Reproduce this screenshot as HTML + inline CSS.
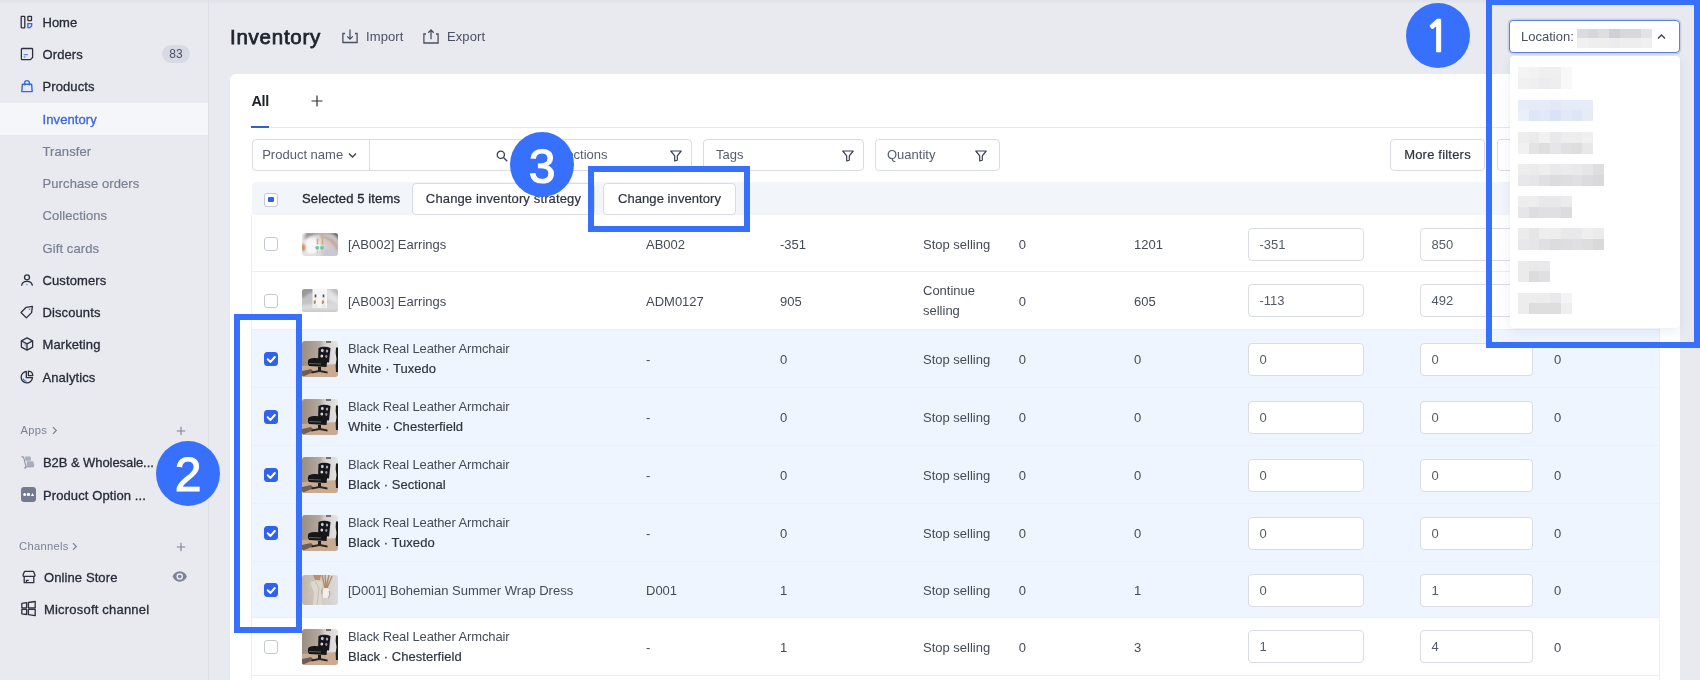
<!DOCTYPE html>
<html lang="en">
<head>
<meta charset="utf-8">
<title>Inventory</title>
<style>
*{box-sizing:border-box;margin:0;padding:0}
html,body{width:1700px;height:680px;overflow:hidden}
body{position:relative;background:#e8eaf0;font-family:"Liberation Sans",sans-serif;font-size:13px;color:#2b303b;-webkit-font-smoothing:antialiased}
.abs{position:absolute}
.topshade{position:absolute;left:0;top:0;width:1700px;height:4px;background:linear-gradient(#dfe1e8,#e8eaf0)}
/* sidebar */
#side{position:absolute;left:0;top:0;width:209px;height:680px;border-right:1px solid #dcdfe7}
.nav{position:absolute;left:0;width:208px;height:32px;line-height:32px;white-space:nowrap}
.nav .t{position:absolute;left:42.5px;top:1px;font-size:13px;color:#262b36;-webkit-text-stroke:.3px #262b36;letter-spacing:.1px}
.nav.sub .t{color:#787f91;-webkit-text-stroke:.2px #787f91}
.nav.act{background:#f5f6fa}
.nav.act .t{color:#3d66dc;-webkit-text-stroke:.35px #3d66dc}
.nav svg{position:absolute;left:20px;top:9px;width:14px;height:14px;overflow:visible}
.badge{position:absolute;left:162px;top:7px;width:28px;height:18px;border-radius:9px;background:#d7dae5;color:#4a5060;font-size:12px;line-height:18px;text-align:center}
  .sec{position:absolute;font-size:11.2px;color:#7b8294;letter-spacing:.3px;white-space:nowrap}
/* main */
#title{position:absolute;left:230px;top:21.5px;font-size:20.5px;line-height:30px;color:#20242e;-webkit-text-stroke:.75px #20242e;letter-spacing:.75px;white-space:nowrap}
.hbtn{position:absolute;top:28px;font-size:13px;line-height:18px;color:#4a5060;white-space:nowrap;letter-spacing:.1px}
#card{position:absolute;left:230px;top:74px;width:1450px;height:620px;background:#fff;border-radius:6px}
.tabline{position:absolute;left:252px;top:127px;width:1407px;height:1px;background:#e6e8ee}
.fbox{position:absolute;top:139px;height:32px;border:1px solid #d9dce4;border-radius:4px;background:#fff;font-size:13px;line-height:30px;color:#565d6c;white-space:nowrap}
.fbox .l{position:absolute;left:11px;top:0}
.btn{position:absolute;height:32px;border:1px solid #d9dce4;border-radius:4px;background:#fff;font-size:13px;line-height:30px;color:#2f3440;text-align:center;white-space:nowrap;-webkit-text-stroke:.2px #2f3440}
/* table */
#bulk{position:absolute;left:252px;top:182px;width:1407px;height:33px;background:#f2f5fa;border-radius:4px 4px 0 0}
.row{position:absolute;left:252px;width:1407px;border-bottom:1px solid #eceef3;background:#fff}
.row.sel{background:#eef5ff;border-bottom-color:#e8f0fc}
.row .c{position:absolute;white-space:nowrap;font-size:13px;line-height:20px;color:#454a57;letter-spacing:0}
.row .n1{letter-spacing:-.12px}
.row .n2{color:#2f3440;-webkit-text-stroke:.18px #2f3440;letter-spacing:.05px}
.cb{position:absolute;left:12px;width:14px;height:14px;border:1px solid #c5c9d4;border-radius:3px;background:#fff}
.cb.on{background:#3062ee;border-color:#3062ee}
.cb.on svg{position:absolute;left:-1px;top:-1px;width:14px;height:14px}
.th{position:absolute;left:50px;width:36px;border-radius:3px;overflow:hidden}
.th svg{display:block}
.inp{position:absolute;height:33px;border:1px solid #d9dce4;border-radius:4px;background:#fff;font-size:13px;line-height:32px;color:#555a67;padding-left:10.5px}
/* annotations */
.circ{position:absolute;width:64px;height:65px;border-radius:50%;background:#3870fe;color:#fff;font-size:48px;line-height:64px;text-align:center;font-weight:400;-webkit-text-stroke:1.1px #fff}
.hl{position:absolute;border:6px solid #3870fe}
/* dropdown */
#loc{position:absolute;left:1509px;top:20px;width:171px;height:33px;border:1px solid #5f80d8;border-radius:4px;background:#fff;box-shadow:0 0 0 1.5px rgba(95,128,216,.22)}
#panel{position:absolute;left:1510px;top:56px;width:170px;height:272px;background:#fff;border-radius:4px;box-shadow:0 4px 12px rgba(60,80,160,.09),0 0 2px rgba(60,80,160,.06)}
.blur{position:absolute;left:8px;height:22px;background:linear-gradient(#f0f0f1 0 50%,#e6e6e8 50% 100%)}
</style>
</head>
<body>
<div id="wrap" style="position:absolute;left:0;top:0;width:1700px;height:680px;will-change:transform">
<div class="topshade"></div>
<div id="side">
 <div class="nav" style="top:6px"><svg viewBox="0 0 14 14" fill="none" stroke="#2b303b" stroke-width="1.3"><rect x="1.2" y="1.4" width="3.6" height="11.4" rx=".6"/><rect x="7.9" y="1.4" width="3.6" height="4.2" rx=".4"/><path d="M7.9 8.6h3.8v2.2l-1.8 1.9h-2z" stroke="#3d66dc"/></svg><span class="t" style="letter-spacing:0">Home</span></div>
 <div class="nav" style="top:38px"><svg viewBox="0 0 14 14" fill="none" stroke="#2b303b" stroke-width="1.3"><path d="M2.2 1.5h9.6a.8.8 0 0 1 .8.8v8.2l-2.2 2.2H2.2a.8.8 0 0 1-.8-.8V2.3a.8.8 0 0 1 .8-.8z"/><path d="M3.8 7.8h4M3.8 10h1.6" stroke="#3d66dc" stroke-width="1.1"/></svg><span class="t">Orders</span><span class="badge">83</span></div>
 <div class="nav" style="top:70px"><svg viewBox="0 0 14 14" fill="none" stroke="#3d66dc" stroke-width="1.4"><path d="M2.4 5.2h9.2l.6 7.4H1.8z" stroke-linejoin="round"/><path d="M4.6 6.6V4a2.4 2.4 0 0 1 4.8 0v2.6"/></svg><span class="t">Products</span></div>
 <div class="nav sub act" style="top:103px"><span class="t">Inventory</span></div>
 <div class="nav sub" style="top:135px"><span class="t">Transfer</span></div>
 <div class="nav sub" style="top:167px"><span class="t">Purchase orders</span></div>
 <div class="nav sub" style="top:199px"><span class="t">Collections</span></div>
 <div class="nav sub" style="top:232px"><span class="t">Gift cards</span></div>
 <div class="nav" style="top:264px"><svg viewBox="0 0 14 14" fill="none" stroke="#2b303b" stroke-width="1.3"><circle cx="7" cy="4.3" r="2.5"/><path d="M1.6 12.8c.3-3 2.6-4.4 5.4-4.4s5.100 1.400 5.400 4.400"/><circle cx="7" cy="11.600" r=".7" fill="#3d66dc" stroke="none"/></svg><span class="t">Customers</span></div>
 <div class="nav" style="top:296px"><svg viewBox="0 0 14 14" fill="none" stroke="#2b303b" stroke-width="1.3" stroke-linejoin="round"><path d="M6.200 2.300 12.400 1.400 11.600 7.600 6.400 12.900 1.000 7.500z"/><circle cx="9.600" cy="4.300" r=".8" fill="#3d66dc" stroke="none"/></svg><span class="t">Discounts</span></div>
 <div class="nav" style="top:328px"><svg viewBox="0 0 14 14" fill="none" stroke="#2b303b" stroke-width="1.3" stroke-linejoin="round"><path d="M7 .9 12.600 3.800V10.200L7 13.100 1.400 10.200V3.800z"/><path d="M1.600 4 7 6.900 12.400 4M7 6.900V13"/><path d="M3 5.600 6 7.300v3.400z" fill="#9db3f0" stroke="none"/></svg><span class="t">Marketing</span></div>
 <div class="nav" style="top:361px"><svg viewBox="0 0 14 14" fill="none" stroke="#2b303b" stroke-width="1.3"><path d="M6.300 1.500A5.700 5.700 0 1 0 12.500 7.700H6.300z" stroke-linejoin="round"/><path d="M8.400 1.200A4.600 4.600 0 0 1 12.800 5.600H8.400z" stroke-linejoin="round"/><path d="M3.200 8.600a3.600 3.600 0 0 0 3.400 2.600" stroke="#3d66dc" stroke-width="1.100"/></svg><span class="t">Analytics</span></div>

 <div class="sec" style="left:20.500px;top:423px;line-height:15px">Apps</div>
 <svg class="abs" style="left:51px;top:425px" width="8" height="11" viewBox="0 0 8 11" fill="none" stroke="#7b8294" stroke-width="1.200"><path d="M2 2.200 5.300 5.500 2 8.800"/></svg>
 <svg class="abs" style="left:176px;top:426px" width="10" height="10" viewBox="0 0 10 10" stroke="#7b8294" stroke-width="1.100"><path d="M5 .8V9.200M.8 5H9.200"/></svg>
 <div class="nav" style="top:446px"><svg viewBox="0 0 14 14" fill="#9a9fae" stroke="none" style="left:21px;top:9px"><path d="M4.200 1.500h5.600v4.200H4.200zM5.800 6.300h6.400l1.300 4.700H5.800z" opacity=".8"/><path d="M.6 1.600 2.600 2.200 5 11.800h7.800" fill="none" stroke="#8a90a0" stroke-width="1.100"/><circle cx="4.300" cy="12.800" r="1" fill="#8a90a0"/></svg><span class="t" style="left:43px;letter-spacing:-.07px">B2B &amp; Wholesale...</span></div>
 <div class="nav" style="top:479px"><svg viewBox="0 0 15 15" style="left:21px;top:8px;width:15px;height:15px"><rect x="0" y="0" width="15" height="15" rx="3.200" fill="#747b90"/><circle cx="3.700" cy="7.500" r="1.500" fill="#fff"/><rect x="6.100" y="6.100" width="2.800" height="2.800" fill="#fff"/><path d="M9.900 9l1.600-3 1.600 3z" fill="#fff"/></svg><span class="t" style="left:43px">Product Option ...</span></div>

 <div class="sec" style="left:19px;top:539px;line-height:15px">Channels</div>
 <svg class="abs" style="left:70.500px;top:541px" width="8" height="11" viewBox="0 0 8 11" fill="none" stroke="#7b8294" stroke-width="1.200"><path d="M2 2.200 5.300 5.500 2 8.800"/></svg>
 <svg class="abs" style="left:176px;top:542px" width="10" height="10" viewBox="0 0 10 10" stroke="#7b8294" stroke-width="1.100"><path d="M5 .8V9.200M.8 5H9.200"/></svg>
 <div class="nav" style="top:560.5px"><svg viewBox="0 0 14 14" fill="none" stroke="#2b303b" stroke-width="1.300" stroke-linejoin="round" style="left:21.500px;top:9px"><path d="M2.600 1.300h8.800l1.600 3.600a2 2 0 0 1-1.200 1.900v5.900H2.200V6.800A2 2 0 0 1 1 4.900z"/><path d="M1.600 6.400h10.800M4.400 12.600v-2.200h2.400"/></svg><span class="t" style="left:44px">Online Store</span>
  <svg viewBox="0 0 16 12" style="left:171.500px;top:10.500px;width:15.500px;height:11px" fill="#7b8294"><path d="M8 .4C4.400.4 1.500 2.700.2 6c1.300 3.300 4.200 5.600 7.800 5.600s6.500-2.300 7.800-5.600C14.500 2.700 11.600.4 8 .4zm0 9.200A3.600 3.600 0 1 1 8 2.400a3.600 3.600 0 0 1 0 7.200zM8 4a2 2 0 1 0 0 4 2 2 0 0 0 0-4z" fill-rule="evenodd"/></svg></div>
 <div class="nav" style="top:592.5px"><svg viewBox="0 0 15 15" fill="none" stroke="#2b303b" stroke-width="1.300" stroke-linejoin="round" style="left:21px;top:8.500px;width:15px;height:15px"><path d="M.8 2.400 5.600 1.700v5.100H.8zM7.400 1.500 14.200.5V6.800H7.400zM.8 8.400h4.800v5.100L.8 12.800zM7.400 8.400h6.800v6.300L7.400 13.700z"/></svg><span class="t" style="left:44px;letter-spacing:.2px">Microsoft channel</span></div>
</div>

<div id="title">Inventory</div>
<svg class="abs" style="left:342px;top:29px" width="16" height="15" viewBox="0 0 16 15" fill="none" stroke="#4a5060" stroke-width="1.300"><path d="M3 4.500H.9v9h14.200v-9H13"/><path d="M8 .6v9.600M5.200 7.400 8 10.200l2.800-2.800"/></svg>
<div class="hbtn" style="left:366px">Import</div>
<svg class="abs" style="left:422.500px;top:28.500px" width="16" height="15.500" viewBox="0 0 16 15.500" fill="none" stroke="#4a5060" stroke-width="1.300"><path d="M3 5H.9v9h14.200V5H13"/><path d="M8 10.200V1M5.300 3.700 8 1l2.700 2.700"/></svg>
<div class="hbtn" style="left:447px">Export</div>

<div id="card"></div>
<div class="abs" style="left:251.500px;top:91px;font-size:14.5px;line-height:20px;font-weight:700;color:#20242e;letter-spacing:-.35px">All</div>
<svg class="abs" style="left:311px;top:95px" width="12" height="12" viewBox="0 0 12 12" stroke="#2b303b" stroke-width="1.200"><path d="M6 .5v11M.5 6h11"/></svg>
<div class="tabline"></div>
<div class="abs" style="left:251px;top:126px;width:18px;height:2px;background:#3a5cc6"></div>

<div class="fbox" style="left:252px;width:273px"><span class="l" style="left:9.2px">Product name</span>
 <svg class="abs" style="left:94.5px;top:12px" width="9" height="7" viewBox="0 0 9 7" fill="none" stroke="#3b4150" stroke-width="1.300"><path d="M1 1.500 4.500 5 8 1.500"/></svg>
 <div class="abs" style="left:116px;top:0;width:1px;height:30px;background:#d9dce4"></div>
 <svg class="abs" style="left:243px;top:10px" width="12" height="12" viewBox="0 0 12 12" fill="none" stroke="#3b4150" stroke-width="1.300"><circle cx="4.800" cy="4.800" r="3.600"/><path d="M7.500 7.500 11.200 11.200"/></svg>
</div>
<div class="fbox" style="left:531px;width:161px"><span class="l" style="left:12px">Collections</span><svg class="abs" style="left:137.500px;top:9.500px" width="12" height="12" viewBox="0 0 12 12" fill="none" stroke="#3b4150" stroke-width="1.200" stroke-linejoin="round"><path d="M.8 1h10.400L7.300 5.800v4.400L4.700 11V5.800z"/></svg></div>
<div class="fbox" style="left:703px;width:161px"><span class="l" style="left:12px">Tags</span><svg class="abs" style="left:137.500px;top:9.500px" width="12" height="12" viewBox="0 0 12 12" fill="none" stroke="#3b4150" stroke-width="1.200" stroke-linejoin="round"><path d="M.8 1h10.400L7.300 5.800v4.400L4.700 11V5.800z"/></svg></div>
<div class="fbox" style="left:875px;width:125px"><span class="l" style="left:11px">Quantity</span><svg class="abs" style="left:99px;top:9.500px" width="12" height="12" viewBox="0 0 12 12" fill="none" stroke="#3b4150" stroke-width="1.200" stroke-linejoin="round"><path d="M.8 1h10.400L7.300 5.800v4.400L4.700 11V5.800z"/></svg></div>
<div class="btn" style="left:1390px;top:139px;width:95px;letter-spacing:.2px">More filters</div>
<div class="btn" style="left:1497px;top:139px;width:162px;text-align:left;padding-left:13px">Edit columns</div>

<div id="bulk"><div class="cb" style="top:10.5px"><div class="abs" style="left:3.2px;top:3.2px;width:5.6px;height:5.6px;background:#3062ee;border-radius:1px"></div></div><div class="abs" style="left:50px;top:7px;line-height:20px;font-size:13px;color:#262b36;-webkit-text-stroke:.35px #262b36;letter-spacing:.12px;white-space:nowrap">Selected 5 items</div></div>
<div class="btn" style="left:412px;top:183px;width:183px;letter-spacing:.14px">Change inventory strategy</div>
<div class="btn" style="left:603px;top:183px;width:133px;letter-spacing:.07px">Change inventory</div>
<div class="row" style="top:215px;height:57px"><div class="cb" style="top:22px"></div><div class="th" style="top:17.75px;height:23px;left:49.500px;width:36.500px"><svg width="37" height="23" viewBox="0 0 37 23"><defs><filter id="be1" x="-20%" y="-20%" width="140%" height="140%"><feGaussianBlur stdDeviation="1.1"/></filter><filter id="be1b" x="-20%" y="-20%" width="140%" height="140%"><feGaussianBlur stdDeviation=".55"/></filter><linearGradient id="g1" x1="0" x2="1"><stop offset="0" stop-color="#e4e3e6"/><stop offset=".5" stop-color="#dcd8da"/><stop offset="1" stop-color="#c9bfbf"/></linearGradient></defs><rect width="37" height="23" fill="url(#g1)"/><g filter="url(#be1)"><path d="M4 -1H38V6Q30 0 18 1 8 2 2 7z" fill="#9d9594"/><path d="M30 -1H38V9Q35 3 30 -1z" fill="#6f6362"/><ellipse cx="10" cy="13" rx="8" ry="8" fill="#f7f7f9"/><path d="M18 3Q30 4 36 16" stroke="#bca8a2" stroke-width="3.2" fill="none"/><path d="M22 8Q29 10 33 20" stroke="#d6c5c0" stroke-width="2.500" fill="none"/><path d="M22 17Q28 14 37 20V24H20z" fill="#c6c9d3"/><ellipse cx="1.500" cy="14.500" rx="2.200" ry="3.800" fill="#c98c4e"/></g><g filter="url(#be1b)"><path d="M15.500 5.500v6M20.500 4.500v7" stroke="#cfae72" stroke-width="1.700"/><circle cx="15.200" cy="14.800" r="1.900" fill="#6cc79a"/><circle cx="20" cy="14.800" r="1.900" fill="#6cc79a"/><path d="M15.300 17.500v3M20 17.500v3" stroke="#d8c7a2" stroke-width="1.200"/></g></svg></div><div class="c" style="left:96px;top:20px">[AB002] Earrings</div><div class="c" style="left:394px;top:20px">AB002</div><div class="c" style="left:528px;top:20px">-351</div><div class="c" style="left:671px;top:20px">Stop selling</div><div class="c" style="left:766.7px;top:20px">0</div><div class="c" style="left:882px;top:20px">1201</div><div class="inp" style="left:996px;top:12.5px;width:116px">-351</div><div class="inp" style="left:1168px;top:12.5px;width:113px">850</div><div class="c" style="left:1302px;top:20px"></div></div>
<div class="row" style="top:272px;height:58px"><div class="cb" style="top:21.5px"></div><div class="th" style="top:16.75px;height:23px;left:49.500px;width:36.500px"><svg width="37" height="23" viewBox="0 0 37 23"><defs><filter id="be2" x="-20%" y="-20%" width="140%" height="140%"><feGaussianBlur stdDeviation=".9"/></filter><filter id="be2b" x="-20%" y="-20%" width="140%" height="140%"><feGaussianBlur stdDeviation=".5"/></filter><linearGradient id="g2" x1="0" x2="1"><stop offset="0" stop-color="#b9b9bc"/><stop offset=".5" stop-color="#cfcfd2"/><stop offset="1" stop-color="#d6d6d9"/></linearGradient></defs><rect width="37" height="23" fill="url(#g2)"/><g filter="url(#be2)"><path d="M-1 -1H12V4Q6 3 3 8L-1 12z" fill="#98989b"/><path d="M-1 9Q5 6 9 11V16H-1z" fill="#c3c3c6"/><path d="M25 0 38 10V16L25 10z" fill="#e4e4e6"/><path d="M27 -1H38V8z" fill="#bcbcbf"/><path d="M-1 16Q18 14 38 16V24H-1z" fill="#d9dadd"/><path d="M-1 21H38V24H-1z" fill="#c9cacd"/></g><g filter="url(#be2b)"><rect x="10.500" y="-1" width="14.500" height="20" fill="#f6f6f6"/><path d="M13.500 5.500v3M21.500 5.500v3" stroke="#5a5450" stroke-width="1.700"/><path d="M13.500 8.500v3M21.500 8.500v3" stroke="#e9e6e2" stroke-width="1.500"/><path d="M12.800 11.500v3.500M21 11.500v3.500" stroke="#b48f6c" stroke-width="2.200"/><path d="M13.300 14 10.500 18.500h6.500zM21.500 14 18.500 18.500h6.500z" fill="#ece7e1"/></g></svg></div><div class="c" style="left:96px;top:19.5px">[AB003] Earrings</div><div class="c" style="left:394px;top:19.5px">ADM0127</div><div class="c" style="left:528px;top:19.5px">905</div><div class="c" style="left:671px;top:8.5px">Continue</div><div class="c" style="left:671px;top:28.5px">selling</div><div class="c" style="left:766.7px;top:19.5px">0</div><div class="c" style="left:882px;top:19.5px">605</div><div class="inp" style="left:996px;top:12px;width:116px">-113</div><div class="inp" style="left:1168px;top:12px;width:113px">492</div><div class="c" style="left:1302px;top:19.5px"></div></div>
<div class="row sel" style="top:330px;height:58px"><div class="cb on" style="top:22px"><svg viewBox="0 0 14 14" fill="none" stroke="#fff" stroke-width="2" stroke-linecap="round" stroke-linejoin="round"><path d="M3.700 7.300 6.500 9.900 10.800 5"/></svg></div><div class="th" style="top:11px;height:36px"><svg width="36" height="36" viewBox="0 0 36 36"><defs><filter id="bl1" x="-10%" y="-10%" width="120%" height="120%"><feGaussianBlur stdDeviation=".55"/></filter><linearGradient id="w1" x1="0" x2="1"><stop offset="0" stop-color="#9a8e84"/><stop offset=".5" stop-color="#b5a99e"/><stop offset=".62" stop-color="#d2cfcb"/><stop offset="1" stop-color="#e6e5e4"/></linearGradient></defs><rect width="36" height="36" fill="url(#w1)"/><g filter="url(#bl1)"><path d="M0 25 36 23V36H0z" fill="#c8ab90"/><path d="M0 30 9 28 12 31 0 36z" fill="#6e6158"/><rect x="24" y="0" width="5" height="2" fill="#77716c"/><path d="M34 6.500Q33 12 34.500 18 33 24 34 31H37V6.500z" fill="#1f1c1a"/><path d="M16.500 7Q22 4.500 28.500 7L27 21.500 16 20.500z" fill="#15161a"/><path d="M6.500 18.500Q12 16 19 18L25 21 24.500 26 7 25Q5 22 6.500 18.500z" fill="#121317"/><path d="M7 22.500 19 23" stroke="#5c5f66" stroke-width="1.200"/><path d="M16 26h3v4h-3z" fill="#1b1b1e"/><path d="M9.500 30.500 17.500 29 25.500 30.500V32.500L17.500 31 9.500 32.500z" fill="#2a2522"/><ellipse cx="20.300" cy="9.500" rx="1.400" ry="1.700" fill="#c9ccd0"/><ellipse cx="25" cy="10" rx="1.200" ry="1.600" fill="#a9adb3"/><ellipse cx="19.800" cy="15" rx="1.400" ry="1.600" fill="#d6d8db"/><ellipse cx="24.300" cy="15.500" rx="1.100" ry="1.400" fill="#94989f"/></g></svg></div><div class="c n1" style="left:96px;top:9px">Black Real Leather Armchair</div><div class="c n2" style="left:96px;top:29px">White · Tuxedo</div><div class="c" style="left:394px;top:20px">-</div><div class="c" style="left:528px;top:20px">0</div><div class="c" style="left:671px;top:20px">Stop selling</div><div class="c" style="left:766.7px;top:20px">0</div><div class="c" style="left:882px;top:20px">0</div><div class="inp" style="left:996px;top:12.5px;width:116px">0</div><div class="inp" style="left:1168px;top:12.5px;width:113px">0</div><div class="c" style="left:1302px;top:20px">0</div></div>
<div class="row sel" style="top:388px;height:58px"><div class="cb on" style="top:22px"><svg viewBox="0 0 14 14" fill="none" stroke="#fff" stroke-width="2" stroke-linecap="round" stroke-linejoin="round"><path d="M3.700 7.300 6.500 9.900 10.800 5"/></svg></div><div class="th" style="top:11px;height:36px"><svg width="36" height="36" viewBox="0 0 36 36"><defs><filter id="bl2" x="-10%" y="-10%" width="120%" height="120%"><feGaussianBlur stdDeviation=".55"/></filter><linearGradient id="w2" x1="0" x2="1"><stop offset="0" stop-color="#9a8e84"/><stop offset=".5" stop-color="#b5a99e"/><stop offset=".62" stop-color="#d2cfcb"/><stop offset="1" stop-color="#e6e5e4"/></linearGradient></defs><rect width="36" height="36" fill="url(#w2)"/><g filter="url(#bl2)"><path d="M0 25 36 23V36H0z" fill="#c8ab90"/><path d="M0 30 9 28 12 31 0 36z" fill="#6e6158"/><rect x="24" y="0" width="5" height="2" fill="#77716c"/><path d="M34 6.500Q33 12 34.500 18 33 24 34 31H37V6.500z" fill="#1f1c1a"/><path d="M16.500 7Q22 4.500 28.500 7L27 21.500 16 20.500z" fill="#15161a"/><path d="M6.500 18.500Q12 16 19 18L25 21 24.500 26 7 25Q5 22 6.500 18.500z" fill="#121317"/><path d="M7 22.500 19 23" stroke="#5c5f66" stroke-width="1.200"/><path d="M16 26h3v4h-3z" fill="#1b1b1e"/><path d="M9.500 30.500 17.500 29 25.500 30.500V32.500L17.500 31 9.500 32.500z" fill="#2a2522"/><ellipse cx="20.300" cy="9.500" rx="1.400" ry="1.700" fill="#c9ccd0"/><ellipse cx="25" cy="10" rx="1.200" ry="1.600" fill="#a9adb3"/><ellipse cx="19.800" cy="15" rx="1.400" ry="1.600" fill="#d6d8db"/><ellipse cx="24.300" cy="15.500" rx="1.100" ry="1.400" fill="#94989f"/></g></svg></div><div class="c n1" style="left:96px;top:9px">Black Real Leather Armchair</div><div class="c n2" style="left:96px;top:29px">White · Chesterfield</div><div class="c" style="left:394px;top:20px">-</div><div class="c" style="left:528px;top:20px">0</div><div class="c" style="left:671px;top:20px">Stop selling</div><div class="c" style="left:766.7px;top:20px">0</div><div class="c" style="left:882px;top:20px">0</div><div class="inp" style="left:996px;top:12.5px;width:116px">0</div><div class="inp" style="left:1168px;top:12.5px;width:113px">0</div><div class="c" style="left:1302px;top:20px">0</div></div>
<div class="row sel" style="top:446px;height:58px"><div class="cb on" style="top:22px"><svg viewBox="0 0 14 14" fill="none" stroke="#fff" stroke-width="2" stroke-linecap="round" stroke-linejoin="round"><path d="M3.700 7.300 6.500 9.900 10.800 5"/></svg></div><div class="th" style="top:11px;height:36px"><svg width="36" height="36" viewBox="0 0 36 36"><defs><filter id="bl3" x="-10%" y="-10%" width="120%" height="120%"><feGaussianBlur stdDeviation=".55"/></filter><linearGradient id="w3" x1="0" x2="1"><stop offset="0" stop-color="#9a8e84"/><stop offset=".5" stop-color="#b5a99e"/><stop offset=".62" stop-color="#d2cfcb"/><stop offset="1" stop-color="#e6e5e4"/></linearGradient></defs><rect width="36" height="36" fill="url(#w3)"/><g filter="url(#bl3)"><path d="M0 25 36 23V36H0z" fill="#c8ab90"/><path d="M0 30 9 28 12 31 0 36z" fill="#6e6158"/><rect x="24" y="0" width="5" height="2" fill="#77716c"/><path d="M34 6.500Q33 12 34.500 18 33 24 34 31H37V6.500z" fill="#1f1c1a"/><path d="M16.500 7Q22 4.500 28.500 7L27 21.500 16 20.500z" fill="#15161a"/><path d="M6.500 18.500Q12 16 19 18L25 21 24.500 26 7 25Q5 22 6.500 18.500z" fill="#121317"/><path d="M7 22.500 19 23" stroke="#5c5f66" stroke-width="1.200"/><path d="M16 26h3v4h-3z" fill="#1b1b1e"/><path d="M9.500 30.500 17.500 29 25.500 30.500V32.500L17.500 31 9.500 32.500z" fill="#2a2522"/><ellipse cx="20.300" cy="9.500" rx="1.400" ry="1.700" fill="#c9ccd0"/><ellipse cx="25" cy="10" rx="1.200" ry="1.600" fill="#a9adb3"/><ellipse cx="19.800" cy="15" rx="1.400" ry="1.600" fill="#d6d8db"/><ellipse cx="24.300" cy="15.500" rx="1.100" ry="1.400" fill="#94989f"/></g></svg></div><div class="c n1" style="left:96px;top:9px">Black Real Leather Armchair</div><div class="c n2" style="left:96px;top:29px">Black · Sectional</div><div class="c" style="left:394px;top:20px">-</div><div class="c" style="left:528px;top:20px">0</div><div class="c" style="left:671px;top:20px">Stop selling</div><div class="c" style="left:766.7px;top:20px">0</div><div class="c" style="left:882px;top:20px">0</div><div class="inp" style="left:996px;top:12.5px;width:116px">0</div><div class="inp" style="left:1168px;top:12.5px;width:113px">0</div><div class="c" style="left:1302px;top:20px">0</div></div>
<div class="row sel" style="top:504px;height:58px"><div class="cb on" style="top:22px"><svg viewBox="0 0 14 14" fill="none" stroke="#fff" stroke-width="2" stroke-linecap="round" stroke-linejoin="round"><path d="M3.700 7.300 6.500 9.900 10.800 5"/></svg></div><div class="th" style="top:11px;height:36px"><svg width="36" height="36" viewBox="0 0 36 36"><defs><filter id="bl4" x="-10%" y="-10%" width="120%" height="120%"><feGaussianBlur stdDeviation=".55"/></filter><linearGradient id="w4" x1="0" x2="1"><stop offset="0" stop-color="#9a8e84"/><stop offset=".5" stop-color="#b5a99e"/><stop offset=".62" stop-color="#d2cfcb"/><stop offset="1" stop-color="#e6e5e4"/></linearGradient></defs><rect width="36" height="36" fill="url(#w4)"/><g filter="url(#bl4)"><path d="M0 25 36 23V36H0z" fill="#c8ab90"/><path d="M0 30 9 28 12 31 0 36z" fill="#6e6158"/><rect x="24" y="0" width="5" height="2" fill="#77716c"/><path d="M34 6.500Q33 12 34.500 18 33 24 34 31H37V6.500z" fill="#1f1c1a"/><path d="M16.500 7Q22 4.500 28.500 7L27 21.500 16 20.500z" fill="#15161a"/><path d="M6.500 18.500Q12 16 19 18L25 21 24.500 26 7 25Q5 22 6.500 18.500z" fill="#121317"/><path d="M7 22.500 19 23" stroke="#5c5f66" stroke-width="1.200"/><path d="M16 26h3v4h-3z" fill="#1b1b1e"/><path d="M9.500 30.500 17.500 29 25.500 30.500V32.500L17.500 31 9.500 32.500z" fill="#2a2522"/><ellipse cx="20.300" cy="9.500" rx="1.400" ry="1.700" fill="#c9ccd0"/><ellipse cx="25" cy="10" rx="1.200" ry="1.600" fill="#a9adb3"/><ellipse cx="19.800" cy="15" rx="1.400" ry="1.600" fill="#d6d8db"/><ellipse cx="24.300" cy="15.500" rx="1.100" ry="1.400" fill="#94989f"/></g></svg></div><div class="c n1" style="left:96px;top:9px">Black Real Leather Armchair</div><div class="c n2" style="left:96px;top:29px">Black · Tuxedo</div><div class="c" style="left:394px;top:20px">-</div><div class="c" style="left:528px;top:20px">0</div><div class="c" style="left:671px;top:20px">Stop selling</div><div class="c" style="left:766.7px;top:20px">0</div><div class="c" style="left:882px;top:20px">0</div><div class="inp" style="left:996px;top:12.5px;width:116px">0</div><div class="inp" style="left:1168px;top:12.5px;width:113px">0</div><div class="c" style="left:1302px;top:20px">0</div></div>
<div class="row sel" style="top:562px;height:56px"><div class="cb on" style="top:21px"><svg viewBox="0 0 14 14" fill="none" stroke="#fff" stroke-width="2" stroke-linecap="round" stroke-linejoin="round"><path d="M3.700 7.300 6.500 9.900 10.800 5"/></svg></div><div class="th" style="top:13px;height:30px"><svg width="36" height="30" viewBox="0 0 36 30"><defs><filter id="bd" x="-10%" y="-10%" width="120%" height="120%"><feGaussianBlur stdDeviation=".7"/></filter><linearGradient id="gd" x1="0" x2="1"><stop offset="0" stop-color="#bfb4ab"/><stop offset=".45" stop-color="#cfc8c2"/><stop offset="1" stop-color="#dcdadd"/></linearGradient></defs><rect width="36" height="30" fill="url(#gd)"/><g filter="url(#bd)"><path d="M11 0h8l-1 5h-5z" fill="#b98f6f"/><path d="M8 7Q14 4 20 7L19 18 20 30H11L12 18z" fill="#ddd8cd"/><path d="M7 8 9 7 10 18 8 19z" fill="#cbc5b8"/><path d="M13 6 17 13 15 30" stroke="#bdb7aa" stroke-width=".8" fill="none"/><path d="M20 0 23 13M27 0 24 13M30 1 25 13M23 0 24 12" stroke="#b08a5f" stroke-width="1.300" fill="none"/><path d="M21 15Q21 13 24 13 27 13 27 15V23H21z" fill="#f1efec"/><path d="M20 19Q19 14 21 14" stroke="#c79f7c" stroke-width="1.100" fill="none"/><path d="M27 16Q29 20 26 23" stroke="#c79f7c" stroke-width="1.100" fill="none"/></g></svg></div><div class="c" style="left:96px;top:19px">[D001] Bohemian Summer Wrap Dress</div><div class="c" style="left:394px;top:19px">D001</div><div class="c" style="left:528px;top:19px">1</div><div class="c" style="left:671px;top:19px">Stop selling</div><div class="c" style="left:766.7px;top:19px">0</div><div class="c" style="left:882px;top:19px">1</div><div class="inp" style="left:996px;top:11.5px;width:116px">0</div><div class="inp" style="left:1168px;top:11.5px;width:113px">1</div><div class="c" style="left:1302px;top:19px">0</div></div>
<div class="row" style="top:618px;height:58px"><div class="cb" style="top:21.5px"></div><div class="th" style="top:10.5px;height:36px"><svg width="36" height="36" viewBox="0 0 36 36"><defs><filter id="bl5" x="-10%" y="-10%" width="120%" height="120%"><feGaussianBlur stdDeviation=".55"/></filter><linearGradient id="w5" x1="0" x2="1"><stop offset="0" stop-color="#9a8e84"/><stop offset=".5" stop-color="#b5a99e"/><stop offset=".62" stop-color="#d2cfcb"/><stop offset="1" stop-color="#e6e5e4"/></linearGradient></defs><rect width="36" height="36" fill="url(#w5)"/><g filter="url(#bl5)"><path d="M0 25 36 23V36H0z" fill="#c8ab90"/><path d="M0 30 9 28 12 31 0 36z" fill="#6e6158"/><rect x="24" y="0" width="5" height="2" fill="#77716c"/><path d="M34 6.500Q33 12 34.500 18 33 24 34 31H37V6.500z" fill="#1f1c1a"/><path d="M16.500 7Q22 4.500 28.500 7L27 21.500 16 20.500z" fill="#15161a"/><path d="M6.500 18.500Q12 16 19 18L25 21 24.500 26 7 25Q5 22 6.500 18.500z" fill="#121317"/><path d="M7 22.500 19 23" stroke="#5c5f66" stroke-width="1.200"/><path d="M16 26h3v4h-3z" fill="#1b1b1e"/><path d="M9.500 30.500 17.500 29 25.500 30.500V32.500L17.500 31 9.500 32.500z" fill="#2a2522"/><ellipse cx="20.300" cy="9.500" rx="1.400" ry="1.700" fill="#c9ccd0"/><ellipse cx="25" cy="10" rx="1.200" ry="1.600" fill="#a9adb3"/><ellipse cx="19.800" cy="15" rx="1.400" ry="1.600" fill="#d6d8db"/><ellipse cx="24.300" cy="15.500" rx="1.100" ry="1.400" fill="#94989f"/></g></svg></div><div class="c n1" style="left:96px;top:8.5px">Black Real Leather Armchair</div><div class="c n2" style="left:96px;top:28.5px">Black · Chesterfield</div><div class="c" style="left:394px;top:19.5px">-</div><div class="c" style="left:528px;top:19.5px">1</div><div class="c" style="left:671px;top:19.5px">Stop selling</div><div class="c" style="left:766.7px;top:19.5px">0</div><div class="c" style="left:882px;top:19.5px">3</div><div class="inp" style="left:996px;top:12px;width:116px">1</div><div class="inp" style="left:1168px;top:12px;width:113px">4</div><div class="c" style="left:1302px;top:19.5px">0</div></div>
<div class="row" style="top:676px;height:58px"><div class="cb" style="top:22px"></div><div class="c n1" style="left:96px;top:9px"></div><div class="c n2" style="left:96px;top:29px"></div><div class="c" style="left:394px;top:20px"></div><div class="c" style="left:528px;top:20px"></div><div class="c" style="left:671px;top:20px"></div><div class="c" style="left:766.7px;top:20px"></div><div class="c" style="left:882px;top:20px"></div><div class="c" style="left:1302px;top:20px"></div></div>
<div class="abs" style="left:251px;top:215px;width:1px;height:471px;background:#eceef3"></div><div class="abs" style="left:1659px;top:215px;width:1px;height:471px;background:#eceef3"></div>
<div id="loc"><div class="abs" style="left:11px;top:0;line-height:31px;font-size:13px;color:#4a5060;white-space:nowrap;letter-spacing:0">Location:</div><div class="abs" style="left:67px;top:8px;width:74.9px;height:9.25px;background:linear-gradient(90deg,#dcdcde 0.00px 10.70px,#d6d7d9 10.70px 21.40px,#dedee0 21.40px 32.10px,#cfd0d3 32.10px 42.80px,#d8d8db 42.80px 53.50px,#d8d8db 53.50px 64.20px,#e3e3e5 64.20px 74.90px)"></div><div class="abs" style="left:67px;top:17.25px;width:74.9px;height:9.25px;background:linear-gradient(90deg,#f0f0f1 0.00px 10.70px,#eeeeef 10.70px 21.40px,#eeeeef 21.40px 32.10px,#ececee 32.10px 42.80px,#eeeeef 42.80px 53.50px,#eeeeef 53.50px 64.20px,#f0f0f1 64.20px 74.90px)"></div><svg class="abs" style="left:147px;top:12px" width="9" height="7" viewBox="0 0 9 7" fill="none" stroke="#3b4150" stroke-width="1.400"><path d="M1 5.500 4.500 2 8 5.500"/></svg></div>
<div id="panel">
 <div class="abs" style="left:8px;top:11px;width:53.6px;height:10.75px;background:linear-gradient(90deg,#f4f4f5 0.00px 10.72px,#f2f2f3 10.72px 21.44px,#efeff0 21.44px 32.16px,#efeff0 32.16px 42.88px,#f8f8f8 42.88px 53.60px)"></div><div class="abs" style="left:8px;top:21.75px;width:53.6px;height:10.75px;background:linear-gradient(90deg,#f1f1f2 0.00px 10.72px,#efeff0 10.72px 21.44px,#ececee 21.44px 32.16px,#eeeeef 32.16px 42.88px,#f8f8f8 42.88px 53.60px)"></div>
 <div class="abs" style="left:8px;top:43.5px;width:75.0px;height:10.75px;background:linear-gradient(90deg,#e8ecf9 0.00px 10.72px,#e6ebf8 10.72px 21.44px,#e6ebf8 21.44px 32.16px,#e2e8f8 32.16px 42.88px,#e6ebf8 42.88px 53.60px,#e6ebf8 53.60px 64.32px,#e8ecf9 64.32px 75.04px)"></div><div class="abs" style="left:8px;top:54.25px;width:75.0px;height:10.75px;background:linear-gradient(90deg,#ebeffa 0.00px 10.72px,#dde5f7 10.72px 21.44px,#e2e8f8 21.44px 32.16px,#d9e2f6 32.16px 42.88px,#e2e8f8 42.88px 53.60px,#dde5f7 53.60px 64.32px,#e6ebf8 64.32px 75.04px)"></div>
 <div class="abs" style="left:8px;top:76px;width:75.0px;height:10.75px;background:linear-gradient(90deg,#ededee 0.00px 10.72px,#ebebec 10.72px 21.44px,#f1f1f2 21.44px 32.16px,#e9e9eb 32.16px 42.88px,#ededee 42.88px 53.60px,#ededee 53.60px 64.32px,#f0f0f1 64.32px 75.04px)"></div><div class="abs" style="left:8px;top:86.75px;width:75.0px;height:10.75px;background:linear-gradient(90deg,#f1f1f2 0.00px 10.72px,#e3e3e5 10.72px 21.44px,#dededf 21.44px 32.16px,#e6e6e8 32.16px 42.88px,#e0e0e2 42.88px 53.60px,#dededf 53.60px 64.32px,#e8e8ea 64.32px 75.04px)"></div>
 <div class="abs" style="left:8px;top:108px;width:85.8px;height:10.75px;background:linear-gradient(90deg,#ededee 0.00px 10.72px,#ebebec 10.72px 21.44px,#eeeeef 21.44px 32.16px,#e9e9eb 32.16px 42.88px,#ebebec 42.88px 53.60px,#e9e9eb 53.60px 64.32px,#e6e6e8 64.32px 75.04px,#dededf 75.04px 85.76px)"></div><div class="abs" style="left:8px;top:118.75px;width:85.8px;height:10.75px;background:linear-gradient(90deg,#e8e8ea 0.00px 10.72px,#e6e6e8 10.72px 21.44px,#e0e0e2 21.44px 32.16px,#dcdcde 32.16px 42.88px,#dededf 42.88px 53.60px,#e0e0e2 53.60px 64.32px,#dcdcde 64.32px 75.04px,#d9d9db 75.04px 85.76px)"></div>
 <div class="abs" style="left:8px;top:140px;width:53.6px;height:10.75px;background:linear-gradient(90deg,#ededee 0.00px 10.72px,#ededee 10.72px 21.44px,#e8e8ea 21.44px 32.16px,#e8e8ea 32.16px 42.88px,#ebebec 42.88px 53.60px)"></div><div class="abs" style="left:8px;top:150.75px;width:53.6px;height:10.75px;background:linear-gradient(90deg,#e6e6e8 0.00px 10.72px,#dededf 10.72px 21.44px,#e0e0e2 21.44px 32.16px,#e0e0e2 32.16px 42.88px,#dcdcde 42.88px 53.60px)"></div>
 <div class="abs" style="left:8px;top:172px;width:85.8px;height:10.75px;background:linear-gradient(90deg,#ebebec 0.00px 10.72px,#e6e6e8 10.72px 21.44px,#eeeeef 21.44px 32.16px,#ededee 32.16px 42.88px,#e9e9eb 42.88px 53.60px,#e9e9eb 53.60px 64.32px,#eeeeef 64.32px 75.04px,#ebebec 75.04px 85.76px)"></div><div class="abs" style="left:8px;top:182.75px;width:85.8px;height:10.75px;background:linear-gradient(90deg,#e8e8ea 0.00px 10.72px,#e6e6e8 10.72px 21.44px,#e0e0e2 21.44px 32.16px,#dcdcde 32.16px 42.88px,#dededf 42.88px 53.60px,#e0e0e2 53.60px 64.32px,#dededf 64.32px 75.04px,#d9d9db 75.04px 85.76px)"></div>
 <div class="abs" style="left:8px;top:204.5px;width:32.2px;height:10.75px;background:linear-gradient(90deg,#ebebec 0.00px 10.72px,#e8e8ea 10.72px 21.44px,#e9e9eb 21.44px 32.16px)"></div><div class="abs" style="left:8px;top:215.25px;width:32.2px;height:10.75px;background:linear-gradient(90deg,#ebebec 0.00px 10.72px,#dcdcde 10.72px 21.44px,#e0e0e2 21.44px 32.16px)"></div>
 <div class="abs" style="left:8px;top:236.5px;width:53.6px;height:10.75px;background:linear-gradient(90deg,#ededee 0.00px 10.72px,#ededee 10.72px 21.44px,#ededee 21.44px 32.16px,#e9e9eb 32.16px 42.88px,#f4f4f5 42.88px 53.60px)"></div><div class="abs" style="left:8px;top:247.25px;width:53.6px;height:10.75px;background:linear-gradient(90deg,#ededee 0.00px 10.72px,#dededf 10.72px 21.44px,#dededf 21.44px 32.16px,#dededf 32.16px 42.88px,#eeeeef 42.88px 53.60px)"></div>
</div>
<div class="hl" style="left:1486px;top:-1px;width:214px;height:349px"></div>
<div class="hl" style="left:234px;top:314px;width:68px;height:319px"></div>
<div class="hl" style="left:588px;top:166px;width:162px;height:66px"></div>
<div class="circ" style="left:1406px;top:2.5px;font-family:NanumGothic,'Liberation Sans',sans-serif;font-weight:700;-webkit-text-stroke:.4px #fff;font-size:44px"><span style="position:relative;top:2.5px;left:-.5px">1</span></div>
<div class="circ" style="left:156px;top:440.5px"><span style="position:relative;top:2.5px">2</span></div>
<div class="circ" style="left:510px;top:132px"><span style="position:relative;top:2.5px">3</span></div>
</div>
</body>
</html>
